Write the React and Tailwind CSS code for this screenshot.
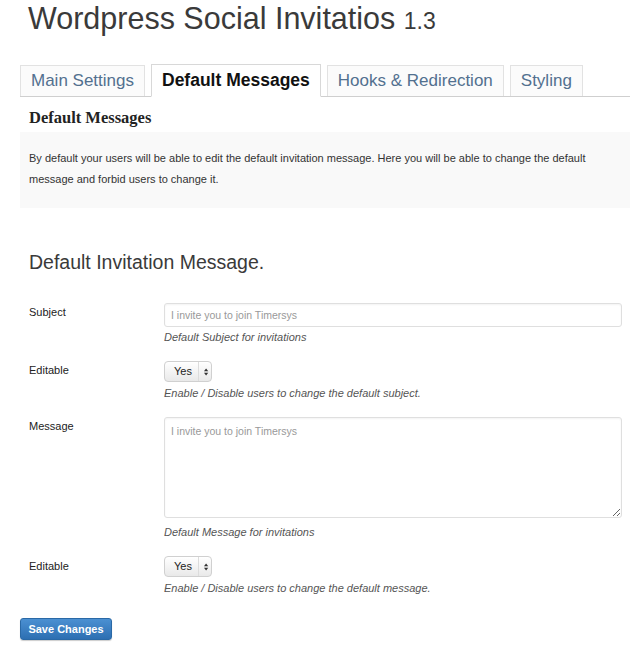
import React from 'react'

const tabs = [
  { label: 'Main Settings', active: false },
  { label: 'Default Messages', active: true },
  { label: 'Hooks & Redirection', active: false },
  { label: 'Styling', active: false },
]

const SelectYes = () => (
  <div className="flex items-center h-[21px] w-[48px] rounded-[4px] border border-[#d0d0d0] bg-gradient-to-b from-[#ffffff] to-[#e9e9e9] shadow-[inset_0_1px_0_#fff]">
    <span className="pl-[9px] pr-[6px] text-[11px] text-[#222]">Yes</span>
    <span className="h-full w-px bg-[#dcdcdc]" />
    <svg width="12" height="12" viewBox="0 0 12 12" className="ml-[2px]">
      <path d="M3.5 5 L6 2 L8.5 5 Z" fill="#333" />
      <path d="M3.5 7 L6 10 L8.5 7 Z" fill="#333" />
    </svg>
  </div>
)

const Row = ({ label, labelPad, children, desc, descGap }) => (
  <div className="grid grid-cols-[144px_458px]">
    <p className={`pl-[9px] text-[11px] leading-[14px] text-[#222] ${labelPad}`}>{label}</p>
    <div>
      {children}
      <p className={`text-[11px] leading-[14px] italic text-[#555] ${descGap}`}>{desc}</p>
    </div>
  </div>
)

const App = () => {
  return (
    <div className="w-[630px] h-[647px] bg-white pl-[20px] font-['Liberation_Sans',Arial,sans-serif] text-[#333] overflow-hidden">
      <h1 className="mt-px pl-[8px] text-[30.5px] leading-[34px] font-light text-[#3a3a3a]">
        Wordpress Social Invitatios <span className="text-[23px]">1.3</span>
      </h1>

      <div className="mt-[27px] flex items-end gap-[6px] border-b border-[#cfcfcf] h-[32px]">
        {tabs.map((tab) => (
          <div
            key={tab.label}
            className={
              tab.active
                ? 'h-[33px] -mb-px px-[10px] flex items-center bg-white border border-[#d8d8d8] border-b-white text-[17.5px] font-bold text-[#111]'
                : 'h-[31px] px-[10px] flex items-center bg-[#fbfbfb] border border-b-0 border-[#e2e2e2] text-[17px] text-[#52708f]'
            }
          >
            {tab.label}
          </div>
        ))}
      </div>

      <h3 className="mt-[12px] pl-[9px] font-['Liberation_Serif',Georgia,serif] font-bold text-[16.5px] leading-[18px] text-[#222]">
        Default Messages
      </h3>

      <div className="mt-[5px] h-[76px] bg-[#f9f9f9] pl-[9px] pr-[20px] pt-[16px]">
        <p className="text-[11px] leading-[21px] text-[#333]">
          By default your users will be able to edit the default invitation message. Here you will be able to change the default message and forbid users to change it.
        </p>
      </div>

      <h2 className="mt-[42px] pl-[9px] text-[19.5px] leading-[24px] font-light text-[#3a3a3a]">
        Default Invitation Message.
      </h2>

      <div className="mt-[29px]">
        <Row label="Subject" labelPad="pt-[2px]" desc="Default Subject for invitations" descGap="mt-[3px]">
          <input
            className="block w-[458px] h-[24px] rounded-[3px] border border-[#dfdfdf] bg-white px-[6px] text-[10.5px] placeholder:text-[#999] outline-none shadow-[inset_0_1px_2px_rgba(0,0,0,0.05)]"
            placeholder="I invite you to join Timersys"
          />
        </Row>
      </div>

      <div className="mt-[17px]">
        <Row label="Editable" labelPad="pt-[2px]" desc="Enable / Disable users to change the default subject." descGap="mt-[4px]">
          <SelectYes />
        </Row>
      </div>

      <div className="mt-[17px]">
        <Row label="Message" labelPad="pt-[2px]" desc="Default Message for invitations" descGap="mt-[7px]">
          <textarea
            className="block w-[458px] h-[101px] rounded-[3px] border border-[#dfdfdf] bg-white px-[6px] py-[6px] text-[10.5px] placeholder:text-[#999] outline-none shadow-[inset_0_1px_2px_rgba(0,0,0,0.05)]"
            placeholder="I invite you to join Timersys"
          />
        </Row>
      </div>

      <div className="mt-[17px]">
        <Row label="Editable" labelPad="pt-[3px]" desc="Enable / Disable users to change the default message." descGap="mt-[4px]">
          <SelectYes />
        </Row>
      </div>

      <button className="mt-[23px] h-[22px] w-[92px] rounded-[3px] border border-[#2a69a6] bg-gradient-to-b from-[#4b90d2] to-[#2d6fb2] text-[11px] font-bold text-white shadow-[0_1px_1px_rgba(0,0,0,0.2)]">
        Save Changes
      </button>
    </div>
  )
}

export default App
